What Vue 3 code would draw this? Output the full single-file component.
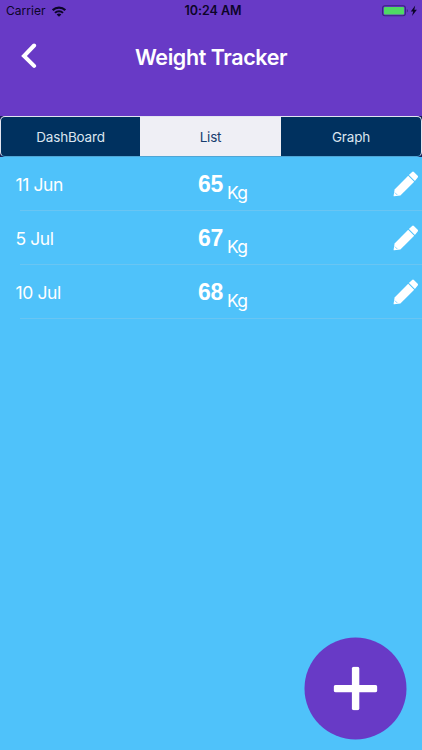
<script setup>
import { ref } from 'vue'

const tabs = ['DashBoard', 'List', 'Graph']
const active = ref('List')
const entries = [
  { date: '11 Jun', weight: 65 },
  { date: '5 Jul', weight: 67 },
  { date: '10 Jul', weight: 68 },
]
</script>

<template>
  <div class="screen">
    <header class="header">
      <div class="status">
        <div class="carrier">
          <span>Carrier</span>
          <svg class="wifi" width="14" height="11" viewBox="0 0 14 11">
            <path d="M0.7 4.2a8.9 8.9 0 0 1 12.6 0" fill="none" stroke="#0c0528" stroke-width="2.3" />
            <path d="M3 6.9a5.6 5.6 0 0 1 8 0" fill="none" stroke="#0c0528" stroke-width="2" />
            <path d="M7 10.8 4.6 8.6a3.4 3.4 0 0 1 4.8 0Z" fill="#0c0528" />
          </svg>
        </div>
        <span class="time">10:24 AM</span>
        <div class="power">
          <svg width="36" height="12" viewBox="0 0 36 12">
            <rect x="0.6" y="0.7" width="22.8" height="10" rx="2.4" fill="none" stroke="#3b2180" stroke-width="1.1" />
            <rect x="1.9" y="2" width="20.2" height="7.4" rx="1" fill="#4fd964" />
            <path d="M24.8 4.1c1.4.5 1.4 2.8 0 3.3Z" fill="#3b2180" />
            <path d="M33.2 0.6 28.8 6.4h2.4l-1.2 4.5 4.9-6.1h-2.6Z" fill="#0c0528" />
          </svg>
        </div>
      </div>
      <div class="navbar">
        <button class="back" aria-label="Back">
          <svg width="16" height="26" viewBox="0 0 16 26">
            <path d="M13.1 2.5 3 13 13.1 22.9" fill="none" stroke="#fff" stroke-width="4" stroke-linecap="round" stroke-linejoin="miter" />
          </svg>
        </button>
        <h1 class="title">Weight Tracker</h1>
      </div>
    </header>

    <nav class="tabs-wrap">
      <div class="tabs">
        <button
          v-for="tab in tabs"
          :key="tab"
          class="tab"
          :class="{ active: tab === active }"
          @click="active = tab"
        >{{ tab }}</button>
      </div>
    </nav>

    <ul class="list">
      <li v-for="entry in entries" :key="entry.date" class="row">
        <span class="date">{{ entry.date }}</span>
        <span class="weight"><b class="value">{{ entry.weight }}</b><span class="unit">Kg</span></span>
        <button class="edit" aria-label="Edit">
          <svg width="26" height="26" viewBox="0 0 26 26" fill="#fff">
            <path d="M15.2 4.8 21.2 10.8 7.4 24.4 1.2 25.3Q.5 25.4.6 24.7L1.6 18.4Z" />
            <path d="M15.9 4.1 19.1.9Q20 .1 20.9.9L24.7 4.7Q25.5 5.6 24.7 6.5L21.9 10.1Z" />
            <path d="m1.9 21.6 2.5 2.5" stroke="#6fcbfb" stroke-width=".8" />
          </svg>
        </button>
      </li>
    </ul>

    <button class="add" aria-label="Add">
      <svg width="44" height="44" viewBox="0 0 44 44" fill="#fff">
        <rect x="18.4" y="0.2" width="7.4" height="43.6" rx="1.8" />
        <rect x="0.2" y="18.4" width="43.6" height="7.3" rx="1.8" />
      </svg>
    </button>
  </div>
</template>

<style>
body {
  margin: 0;
}
</style>

<style scoped>
.screen {
  position: relative;
  width: 422px;
  height: 750px;
  overflow: hidden;
  background: #4fc2fa;
  font-family: Inter, "Liberation Sans", sans-serif;
  color: #fff;
}
button {
  margin: 0;
  padding: 0;
  border: 0;
  background: none;
  font: inherit;
  color: inherit;
}
svg {
  display: block;
}
.header {
  height: 116px;
  background: #683ac6;
}
.status {
  display: grid;
  grid-template-columns: 1fr auto 1fr;
  align-items: center;
  height: 22px;
  padding: 0 4px 0 6px;
  color: #0c0528;
  line-height: 22px;
}
.carrier {
  display: flex;
  align-items: center;
  gap: 6px;
  font-size: 12px;
  letter-spacing: 0.05px;
}
.time {
  padding-left: 2px;
  font-size: 12.5px;
  font-weight: 600;
  letter-spacing: -0.05px;
}
.power {
  display: flex;
  justify-content: flex-end;
}
.navbar {
  display: grid;
  grid-template-columns: 60px 1fr 60px;
  align-items: center;
  height: 68px;
}
.back {
  padding-left: 21px;
}
.title {
  margin: 1px 0 0;
  text-align: center;
  font-size: 21.5px;
  line-height: 30px;
  font-weight: 600;
  letter-spacing: -0.42px;
}
.tabs-wrap {
  background: #17205a;
  height: 41px;
}
.tabs {
  display: grid;
  grid-template-columns: 139px 141px 1fr;
  box-sizing: border-box;
  height: 41px;
  border: 1px solid #e3e5f0;
  border-bottom-color: #4fa5d5;
  border-radius: 5px;
  overflow: hidden;
  background: #00315f;
}
.tab {
  padding-top: 1px;
  font-size: 13.5px;
  line-height: 38px;
  letter-spacing: -0.2px;
  color: #dbe5ef;
}
.tab.active {
  background: #efeff5;
  color: #173d6e;
}
.list {
  margin: 0;
  padding: 0;
  list-style: none;
}
.row {
  display: grid;
  grid-template-columns: 182px 1fr 29px;
  height: 54px;
  padding-left: 16px;
  background: linear-gradient(#69c5f3, #69c5f3) 20px 53px / 402px 1px no-repeat;
}
.date {
  margin-left: -0.5px;
  font-size: 17.5px;
  line-height: 55px;
  letter-spacing: -0.4px;
}
.weight {
  display: flex;
  gap: 4px;
}
.value {
  font-family: "Liberation Sans", Arial, sans-serif;
  font-size: 23px;
  line-height: 55px;
  font-weight: 700;
  letter-spacing: -0.3px;
}
.unit {
  padding-top: 14px;
  font-size: 17.5px;
  line-height: 43px;
  letter-spacing: -0.9px;
}
.edit {
  align-self: start;
  padding-top: 14px;
}
.add {
  position: absolute;
  left: 305px;
  top: 638px;
  display: grid;
  place-items: center;
  width: 102px;
  height: 102px;
  border-radius: 50%;
  background: #683ac6;
  transform: translate(-0.5px, -0.5px);
}
</style>
